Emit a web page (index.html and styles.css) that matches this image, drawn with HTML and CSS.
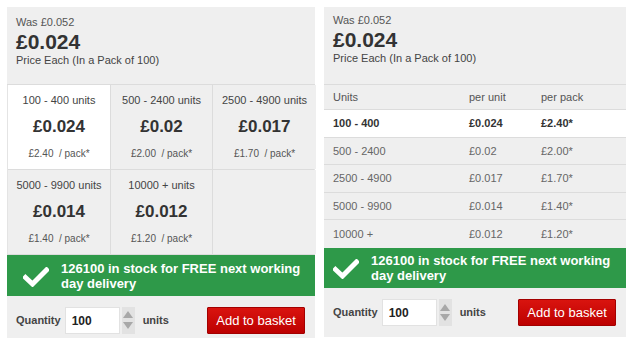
FILE: index.html
```html
<!DOCTYPE html>
<html>
<head>
<meta charset="utf-8">
<link rel="stylesheet" href="styles.css">
</head>
<body>
<div class="wrap">
  <section class="panel panel-left">
    <div class="head">
      <div class="was">Was £0.052</div>
      <div class="price">£0.024</div>
      <div class="each">Price Each (In a Pack of 100)</div>
    </div>
    <div class="tiers">
      <div class="tier active"><div class="range">100 - 400 units</div><div class="tprice">£0.024</div><div class="pack">£2.40 &nbsp;/ pack*</div></div>
      <div class="tier"><div class="range">500 - 2400 units</div><div class="tprice">£0.02</div><div class="pack">£2.00 &nbsp;/ pack*</div></div>
      <div class="tier"><div class="range">2500 - 4900 units</div><div class="tprice">£0.017</div><div class="pack">£1.70 &nbsp;/ pack*</div></div>
      <div class="tier"><div class="range">5000 - 9900 units</div><div class="tprice">£0.014</div><div class="pack">£1.40 &nbsp;/ pack*</div></div>
      <div class="tier"><div class="range">10000 + units</div><div class="tprice">£0.012</div><div class="pack">£1.20 &nbsp;/ pack*</div></div>
      <div class="tier"></div>
    </div>
    <div class="stock">
      <svg class="tick" viewBox="0 0 26 20" width="26" height="20"><path d="M2.5 10.5 L9.5 17 L23.5 3" fill="none" stroke="#fff" stroke-width="5" stroke-linecap="square"/></svg>
      <span>126100 in stock for FREE next working day delivery</span>
    </div>
    <div class="buy">
      <span class="qlabel">Quantity</span>
      <div class="qinput">100</div>
      <div class="spin"><span class="up"></span><span class="down"></span></div>
      <span class="ulabel">units</span>
      <button class="add">Add to basket</button>
    </div>
  </section>

  <section class="panel panel-right">
    <div class="head head-r">
      <div class="was">Was £0.052</div>
      <div class="price">£0.024</div>
      <div class="each">Price Each (In a Pack of 100)</div>
    </div>
    <div class="table">
      <div class="row th"><span class="c1">Units</span><span class="c2">per unit</span><span class="c3">per pack</span></div>
      <div class="row active"><span class="c1">100 - 400</span><span class="c2">£0.024</span><span class="c3">£2.40*</span></div>
      <div class="row"><span class="c1">500 - 2400</span><span class="c2">£0.02</span><span class="c3">£2.00*</span></div>
      <div class="row"><span class="c1">2500 - 4900</span><span class="c2">£0.017</span><span class="c3">£1.70*</span></div>
      <div class="row"><span class="c1">5000 - 9900</span><span class="c2">£0.014</span><span class="c3">£1.40*</span></div>
      <div class="row"><span class="c1">10000 +</span><span class="c2">£0.012</span><span class="c3">£1.20*</span></div>
    </div>
    <div class="stock stock-r">
      <svg class="tick" viewBox="0 0 26 20" width="26" height="20"><path d="M2.5 10.5 L9.5 17 L23.5 3" fill="none" stroke="#fff" stroke-width="5" stroke-linecap="square"/></svg>
      <span>126100 in stock for FREE next working day delivery</span>
    </div>
    <div class="buy buy-r">
      <span class="qlabel">Quantity</span>
      <div class="qinput">100</div>
      <div class="spin"><span class="up"></span><span class="down"></span></div>
      <span class="ulabel">units</span>
      <button class="add">Add to basket</button>
    </div>
  </section>
</div>
</body>
</html>
```

FILE: styles.css
```css
* { box-sizing: border-box; }
html, body { margin: 0; padding: 0; background: #fff; }
body { font-family: "Liberation Sans", Arial, sans-serif; color: #333; }

.wrap {
  display: flex;
  align-items: flex-start;
  gap: 9px;
  padding: 7px 0 0 7px;
}

.panel { background: #efefef; }
.panel-left { width: 308px; height: 331px; display: flex; flex-direction: column; }
.panel-right { width: 302px; height: 330px; display: flex; flex-direction: column; }

.head {
  height: 78px;
  padding: 9px 9px 0;
  border-bottom: 1px solid #dcdcdc;
}
.head-r { padding-top: 7px; }
.was { font-size: 11px; line-height: 13px; color: #555; }
.price { font-size: 21px; font-weight: bold; line-height: 24px; color: #333; margin-top: 1px; }
.each { font-size: 11px; line-height: 13px; color: #444; }

.tiers {
  display: grid;
  grid-template-columns: 102px 101px 103px;
  grid-auto-rows: 84px;
  gap: 1px;
  background: #dcdcdc;
  border: 1px solid #e4e4e4;
  border-top: 0;
  border-bottom: 1px solid #dcdcdc;
}
.tier { background: #efefef; text-align: center; padding-top: 8px; }
.tier.active { background: #fff; }
.range { font-size: 11px; line-height: 14px; color: #444; }
.tprice { font-size: 17px; font-weight: bold; line-height: 20px; color: #333; margin-top: 10px; }
.pack { font-size: 10px; line-height: 14px; color: #555; margin-top: 10px; }

.stock {
  height: 41px;
  background: #2e9949;
  display: flex;
  align-items: center;
  gap: 12px;
  padding: 0 10px 0 16px;
  color: #fff;
  font-size: 13px;
  font-weight: bold;
  line-height: 15px;
}
.stock span { flex: 1; }
.stock .tick { flex: none; margin-top: 2px; }
.stock-r { height: 40px; padding-left: 9px; padding-right: 4px; }

.buy {
  flex: 1;
  display: flex;
  align-items: center;
  padding: 6px 0 0 9px;
  font-size: 11px;
}
.qlabel { font-weight: bold; color: #444; }
.qinput {
  width: 55px;
  height: 27px;
  margin-left: 4px;
  background: #fff;
  border: 1px solid #e2e2e2;
  font-size: 12px;
  font-weight: bold;
  color: #222;
  padding: 6px 0 0 6px;
}
.spin {
  width: 13px;
  height: 27px;
  margin-left: 2px;
  background: #e2e2e2;
  display: flex;
  flex-direction: column;
  align-items: center;
  justify-content: space-around;
  padding: 3px 0;
}
.spin .up { width: 0; height: 0; border-left: 5px solid transparent; border-right: 5px solid transparent; border-bottom: 7px solid #a8a8a8; }
.spin .down { width: 0; height: 0; border-left: 5px solid transparent; border-right: 5px solid transparent; border-top: 7px solid #a8a8a8; }
.ulabel { font-weight: bold; color: #444; margin-left: 8px; }
.add {
  margin-left: auto;
  margin-right: 10px;
  width: 98px;
  height: 27px;
  background: linear-gradient(#d9140f, #bd0000);
  border: 1px solid #a30000;
  border-radius: 1px;
  color: #fff;
  font-family: "Liberation Sans", Arial, sans-serif;
  font-size: 13px;
  padding: 0;
}
.buy-r { padding-top: 0; }

.table { font-size: 11px; }
.row {
  display: flex;
  align-items: center;
  height: 27.5px;
  padding-left: 9px;
  border-bottom: 1px solid #dcdcdc;
  color: #666;
}
.row.th { height: 25px; color: #555; }
.row.active { background: #fff; font-weight: bold; color: #333; }
.row:last-child { border-bottom: 0; }
.c1 { width: 136px; }
.c2 { width: 72px; }
.c3 { flex: 1; }
```
